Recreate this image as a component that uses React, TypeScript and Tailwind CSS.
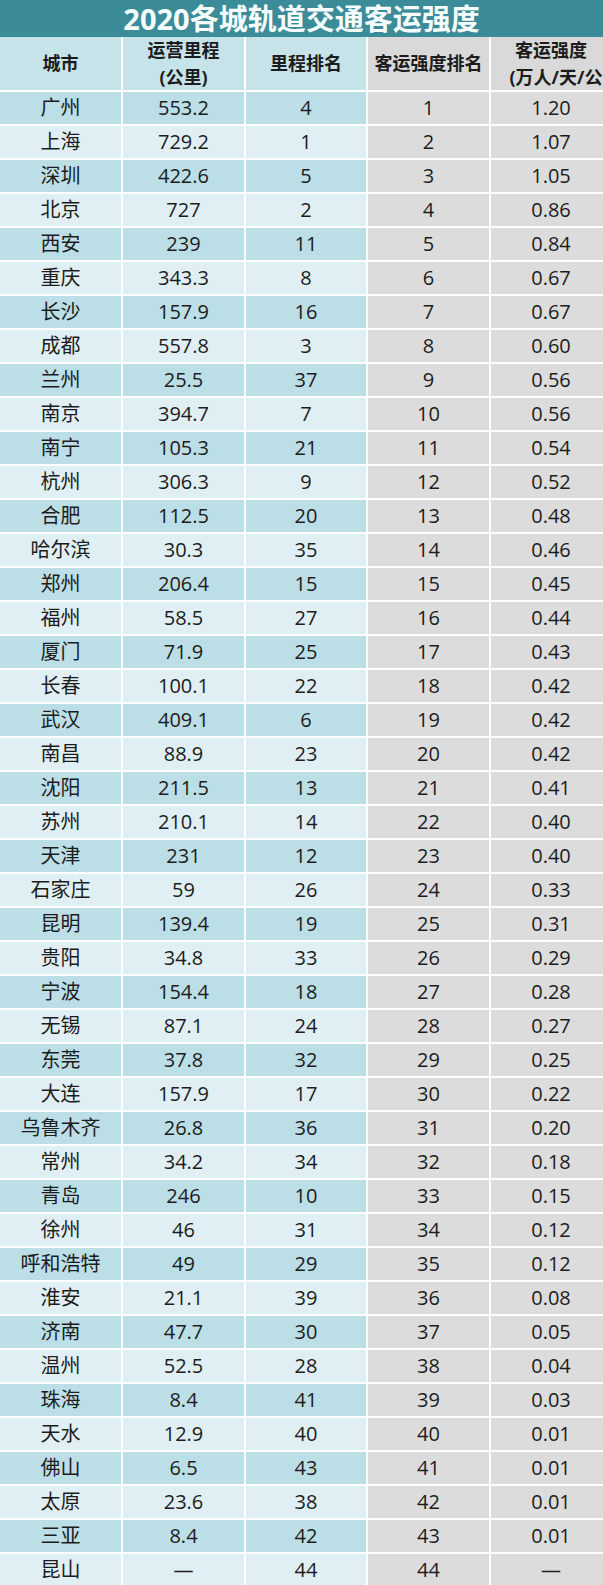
import React from "react";

const rows: [string, string, string, string, string][] = [
  ["广州", "553.2", "4", "1", "1.20"],
  ["上海", "729.2", "1", "2", "1.07"],
  ["深圳", "422.6", "5", "3", "1.05"],
  ["北京", "727", "2", "4", "0.86"],
  ["西安", "239", "11", "5", "0.84"],
  ["重庆", "343.3", "8", "6", "0.67"],
  ["长沙", "157.9", "16", "7", "0.67"],
  ["成都", "557.8", "3", "8", "0.60"],
  ["兰州", "25.5", "37", "9", "0.56"],
  ["南京", "394.7", "7", "10", "0.56"],
  ["南宁", "105.3", "21", "11", "0.54"],
  ["杭州", "306.3", "9", "12", "0.52"],
  ["合肥", "112.5", "20", "13", "0.48"],
  ["哈尔滨", "30.3", "35", "14", "0.46"],
  ["郑州", "206.4", "15", "15", "0.45"],
  ["福州", "58.5", "27", "16", "0.44"],
  ["厦门", "71.9", "25", "17", "0.43"],
  ["长春", "100.1", "22", "18", "0.42"],
  ["武汉", "409.1", "6", "19", "0.42"],
  ["南昌", "88.9", "23", "20", "0.42"],
  ["沈阳", "211.5", "13", "21", "0.41"],
  ["苏州", "210.1", "14", "22", "0.40"],
  ["天津", "231", "12", "23", "0.40"],
  ["石家庄", "59", "26", "24", "0.33"],
  ["昆明", "139.4", "19", "25", "0.31"],
  ["贵阳", "34.8", "33", "26", "0.29"],
  ["宁波", "154.4", "18", "27", "0.28"],
  ["无锡", "87.1", "24", "28", "0.27"],
  ["东莞", "37.8", "32", "29", "0.25"],
  ["大连", "157.9", "17", "30", "0.22"],
  ["乌鲁木齐", "26.8", "36", "31", "0.20"],
  ["常州", "34.2", "34", "32", "0.18"],
  ["青岛", "246", "10", "33", "0.15"],
  ["徐州", "46", "31", "34", "0.12"],
  ["呼和浩特", "49", "29", "35", "0.12"],
  ["淮安", "21.1", "39", "36", "0.08"],
  ["济南", "47.7", "30", "37", "0.05"],
  ["温州", "52.5", "28", "38", "0.04"],
  ["珠海", "8.4", "41", "39", "0.03"],
  ["天水", "12.9", "40", "40", "0.01"],
  ["佛山", "6.5", "43", "41", "0.01"],
  ["太原", "23.6", "38", "42", "0.01"],
  ["三亚", "8.4", "42", "43", "0.01"],
  ["昆山", "—", "44", "44", "—"],
];

const font = {
  fontFamily: '"Open Sans", "Noto Sans CJK SC", sans-serif',
};

export default function App() {
  return (
    <div className="w-[603px] h-[1585px] overflow-hidden bg-white text-[#1c1c1c]" style={font}>
      <div className="h-[37px] bg-[#3b8b99] flex items-center justify-center">
        <span className="text-[29px] font-bold text-[#f4fcfc] leading-none">
          2020各城轨道交通客运强度
        </span>
      </div>
      <div className="grid grid-cols-[121px_121px_120px_121px_120px] gap-x-[2px] gap-y-[2px] bg-white">
        <div className="h-[53px] bg-[#c6e3ea] flex items-center justify-center text-[18px] font-bold">城市</div>
        <div className="h-[53px] bg-[#c6e3ea] flex flex-col items-center justify-center text-[18px] font-bold leading-[27px]">
          <span>运营里程</span>
          <span>(公里)</span>
        </div>
        <div className="h-[53px] bg-[#c6e3ea] flex items-center justify-center text-[18px] font-bold">里程排名</div>
        <div className="h-[53px] bg-[#d9d9d9] flex items-center justify-center text-[18px] font-bold whitespace-nowrap">客运强度排名</div>
        <div className="h-[53px] bg-[#d9d9d9] flex flex-col items-center justify-center text-[18px] font-bold leading-[27px] whitespace-nowrap overflow-hidden">
          <span>客运强度</span>
          <span className="pl-[10px]">(万人/天/公</span>
        </div>
        {rows.map((r, i) => {
          const dark = i % 2 === 0;
          const blue = dark ? "bg-[#bbdee7]" : "bg-[#e0eff3]";
          return (
            <React.Fragment key={i}>
              <div className={`h-[32px] ${blue} flex items-center justify-center text-[20px] whitespace-nowrap`}>{r[0]}</div>
              <div className={`h-[32px] ${blue} flex items-center justify-center text-[20px]`}>{r[1]}</div>
              <div className={`h-[32px] ${blue} flex items-center justify-center text-[20px]`}>{r[2]}</div>
              <div className="h-[32px] bg-[#dcdcdc] flex items-center justify-center text-[20px]">{r[3]}</div>
              <div className="h-[32px] bg-[#dcdcdc] flex items-center justify-center text-[20px]">{r[4]}</div>
            </React.Fragment>
          );
        })}
      </div>
    </div>
  );
}
